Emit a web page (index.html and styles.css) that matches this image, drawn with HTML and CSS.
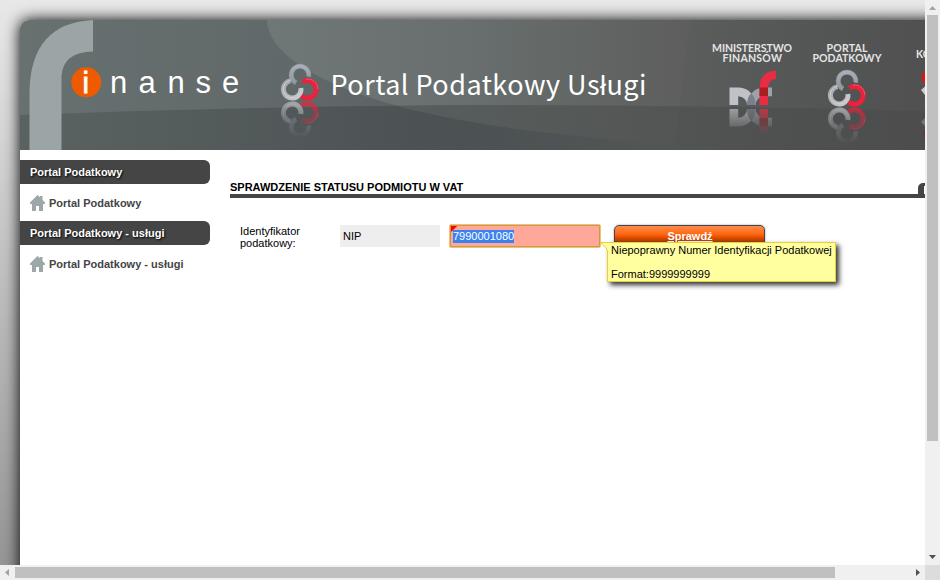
FILE: index.html
```html
<!DOCTYPE html>
<html lang="pl">
<head>
<meta charset="utf-8">
<title>Portal Podatkowy</title>
<link rel="stylesheet" href="styles.css">
</head>
<body>
<div class="window">
  <div class="viewport">
    <div class="page">
      <header class="banner">
        <svg width="905" height="130" viewBox="20 20 905 130">
          <defs>
            <linearGradient id="base" gradientUnits="userSpaceOnUse" x1="20" y1="0" x2="925" y2="0">
              <stop offset="0" stop-color="#677170"/><stop offset=".3" stop-color="#616869"/><stop offset=".5" stop-color="#5a6062"/><stop offset=".72" stop-color="#5c6061"/><stop offset="1" stop-color="#4a4a4a"/>
            </linearGradient>
            <linearGradient id="leaf" gradientUnits="userSpaceOnUse" x1="265" y1="0" x2="765" y2="0">
              <stop offset="0" stop-color="#707877"/><stop offset=".4" stop-color="#686f6e"/><stop offset=".9" stop-color="#5c5c5b"/><stop offset="1" stop-color="#575a5a"/>
            </linearGradient>
            <linearGradient id="sheen" gradientUnits="userSpaceOnUse" x1="690" y1="0" x2="925" y2="0">
              <stop offset="0" stop-color="#5a5d5d"/><stop offset="1" stop-color="#4d4d4c"/>
            </linearGradient>
            <linearGradient id="floor" gradientUnits="userSpaceOnUse" x1="20" y1="0" x2="925" y2="0">
              <stop offset="0" stop-color="#1c2020" stop-opacity=".18"/><stop offset=".45" stop-color="#1c2020" stop-opacity=".25"/><stop offset="1" stop-color="#303030" stop-opacity=".12"/>
            </linearGradient>
            <linearGradient id="silver" x1="0" y1="0" x2="1" y2="1">
              <stop offset="0" stop-color="#9fa4aa"/><stop offset="1" stop-color="#cacbcf"/>
            </linearGradient>
            <linearGradient id="steel" x1="0" y1="0" x2="0" y2="1">
              <stop offset="0" stop-color="#a9afb7"/><stop offset="1" stop-color="#8f979f"/>
            </linearGradient>
            <linearGradient id="fade" x1="0" y1="1" x2="0" y2="0">
              <stop offset="0" stop-color="#fff" stop-opacity=".7"/><stop offset=".95" stop-color="#fff" stop-opacity="0"/>
            </linearGradient>
            <mask id="ringfade" maskUnits="userSpaceOnUse" x="-2" y="-2" width="43" height="41"><rect x="-2" y="-2" width="43" height="39" fill="url(#fade)"/></mask>
            <mask id="mffade" maskUnits="userSpaceOnUse" x="-2" y="6" width="52" height="31"><rect x="-2" y="8" width="52" height="28" fill="url(#fade)"/></mask>
            <g id="rings" fill="none" stroke-width="5">
              <path d="M15 18.800A8.800 8.800 0 1 1 27.700 12.500" stroke="#858c92"/>
              <path d="M15 18.800A8.800 8.800 0 1 1 27.700 12.500" stroke="url(#steel)" stroke-width="3.600"/>
              <path d="M9.500 16.600A8.800 8.800 0 1 0 19.900 24" stroke="url(#silver)"/>
              <path d="M9.500 16.200A9 9 0 1 0 20.200 24.500" stroke="#d1d2d5" stroke-width="1"/>
              <path d="M21.500 18.100A8.800 8.800 0 1 1 20.500 31.900" stroke="#e9223d"/>
              <path d="M25 15.200A10 10 0 0 1 36.800 25" stroke="#ef6376" stroke-width=".8"/>
            </g>
            <g id="mf">
              <path d="M0 35V17.500H8.700A17.500 17.500 0 0 1 26.200 35H17.500A8.800 8.800 0 0 0 8.700 26.200V35Z" fill="#bfc2c7"/>
              <path d="M17.500 35A17.500 17.500 0 0 1 35 17.500H42.500V26.200H35A8.800 8.800 0 0 0 26.200 35Z" fill="#9da2aa"/>
              <path d="M17.500 35Q17.700 26.500 21.800 23.300Q26 28 26.200 35Z" fill="#7b818b"/>
              <path d="M30 35V17Q31 1 46.500 .7V9Q39 9.500 38.500 18V35Z" fill="#e92c43"/>
              <path d="M30 17.500H38.500V26H30Z" fill="#a71e25"/>
            </g>
          </defs>
          <rect x="20" y="20" width="905" height="130" fill="url(#base)"/>
          <path d="M267 20C269 65 355 100 455 119Q560 139 765 150H925V20Z" fill="url(#leaf)"/>
          <path d="M690 20L925 20V150H765Q700 147 675 145Z" fill="url(#sheen)" opacity=".75"/>
          <path d="M20 134.500V115Q230 107 450 105Q700 105 925 111V150H20Z" fill="url(#floor)"/>
          <path d="M29.500 150V91Q31 23 93 20V51.500Q63 52 61.500 76V150Z" fill="#9ca5a5"/>
          <circle cx="86.300" cy="82.300" r="15" fill="#ee5a00"/>
          <text class="brand-i" x="82.600" y="93">i</text>
          <text class="brand" x="110 138.500 167.500 195.500 222" y="93">nanse</text>
          <g transform="translate(281 64)"><use href="#rings"/></g>
          <g transform="translate(281 138) scale(1 -1)"><use href="#rings" mask="url(#ringfade)"/></g>
          <text class="title" x="330.500" y="94.800" textLength="316">Portal Podatkowy Usługi</text>
          <text class="label" x="712" y="51.500" textLength="80">MINISTERSTWO</text>
          <text class="label" x="722.500" y="61.500" textLength="59.500">FINANSÓW</text>
          <g transform="translate(729.500 70)"><use href="#mf"/></g>
          <g transform="translate(729.500 144) scale(1 -1)"><use href="#mf" mask="url(#mffade)"/></g>
          <text class="label" x="826.500" y="51.500" textLength="41">PORTAL</text>
          <text class="label" x="812.500" y="61.500" textLength="69">PODATKOWY</text>
          <g transform="translate(828 70)"><use href="#rings"/></g>
          <g transform="translate(828 144) scale(1 -1)"><use href="#rings" mask="url(#ringfade)"/></g>
          <text class="label" x="916" y="57.500">KO</text>
          <path d="M925 73Q921 77 925 83Z" fill="#f10d08" stroke="#f10d08" stroke-width="2"/>
          <path d="M921 90L925 86.500V95Z" fill="#ccc"/>
          <path d="M921 122L925 118V126Z" fill="#777"/>
          <path d="M923 132L925 130V140Z" fill="#6f3333"/>
        </svg>
      </header>
      <div class="columns">
        <nav class="menu">
          <h2 class="menu-title">Portal Podatkowy</h2>
          <a class="menu-link"><svg width="15" height="16" viewBox="0 0 15 16"><path d="M7.500 0L10 2.300V1H12.500V5L15 7.500V9H13V16H9V11H6V16H2V9H0V7.500Z" fill="#9ba7a8"/></svg>Portal Podatkowy</a>
          <h2 class="menu-title">Portal Podatkowy - usługi</h2>
          <a class="menu-link"><svg width="15" height="16" viewBox="0 0 15 16"><path d="M7.500 0L10 2.300V1H12.500V5L15 7.500V9H13V16H9V11H6V16H2V9H0V7.500Z" fill="#9ba7a8"/></svg>Portal Podatkowy - usługi</a>
        </nav>
        <main class="content">
          <div class="heading"><h1>SPRAWDZENIE STATUSU PODMIOTU W VAT</h1><span class="tab"></span></div>
          <div class="form">
            <label class="caption">Identyfikator podatkowy:</label>
            <div class="kind">NIP</div>
            <div class="field"><span class="selected">7990001080</span>
              <div class="tip">Niepoprawny Numer Identyfikacji Podatkowej<br><br>Format:9999999999
                <svg class="tip-tail" width="8" height="8" viewBox="0 0 8 8"><path d="M0 0H8V8H7V6.500Z" fill="#ffffa0"/><path d="M0 .5H8M.5 .5L6.500 6V8" fill="none" stroke="#e6d034"/></svg>
              </div>
            </div>
            <div class="submit"><span>Sprawdź</span></div>
          </div>
        </main>
      </div>
    </div>
  </div>
  <div class="vbar">
    <svg width="15" height="15"><path d="M4 10L7.500 6L11 10Z" fill="#a3a3a3"/></svg>
    <div class="vthumb"></div>
    <svg width="15" height="15"><path d="M4 5L7.500 9L11 5Z" fill="#505050"/></svg>
  </div>
  <div class="hbar">
    <svg width="15" height="15"><path d="M9 4L5 7.500L9 11Z" fill="#a3a3a3"/></svg>
    <div class="hthumb"></div>
    <svg width="15" height="15"><path d="M6 4L10 7.500L6 11Z" fill="#505050"/></svg>
  </div>
  <div class="corner"></div>
</div>
</body>
</html>
```
FILE: styles.css
```css
* { box-sizing: border-box; }
body {
  margin: 0;
  font: 11px/12px "Liberation Sans", Arial, sans-serif;
  color: #000;
}
svg { display: block; flex: none; }
.window {
  display: grid;
  grid-template: 565px 15px / 925px 15px;
  width: 940px;
  height: 580px;
  overflow: hidden;
}
.viewport {
  overflow: hidden;
  padding: 20px 0 0 20px;
  background: linear-gradient(#e8e8e8 0, #e4e4e4 30px, #959595 565px);
}
.page {
  width: 960px;
  height: 620px;
  background: #fff;
  border-top-left-radius: 9px;
  box-shadow: 0 0 15px #000;
}
.banner {
  height: 130px;
  width: 905px;
  overflow: hidden;
  border-top-left-radius: 9px;
}
.brand, .brand-i { font-family: "Liberation Sans", Arial, sans-serif; font-size: 31px; fill: #fff; }
.brand-i { font-size: 29px; stroke: #fff; stroke-width: .8px; }
.title { font-family: "Noto Sans CJK SC", sans-serif; font-size: 27px; fill: #fff; }
.label { font-family: Lato, sans-serif; font-weight: 700; font-size: 10.5px; fill: #e4e4e4; }

.columns { display: flex; gap: 20px; width: 905px; }
.menu { width: 190px; padding-top: 10px; }
.menu-title {
  margin: 0;
  height: 24px;
  padding-left: 10px;
  font-size: 11px;
  line-height: 24px;
  color: #fff;
  background: #454545;
  border-radius: 0 6px 6px 0;
  text-shadow: 1px 1px 2px #000;
}
.menu-link {
  display: flex;
  align-items: center;
  gap: 4px;
  height: 37px;
  padding: 1px 0 0 10px;
  font-weight: 700;
  color: #454545;
}
.content { flex: 1; padding-top: 31px; }
.heading {
  display: flex;
  justify-content: space-between;
  align-items: flex-end;
  height: 17px;
  border-bottom: 4px solid #454545;
}
.heading h1 { margin: 0; font-size: 11px; line-height: 13px; }
.tab {
  width: 7px;
  height: 11px;
  border: solid #454545;
  border-width: 3px 0 0 6px;
  border-top-left-radius: 5px;
}
.form { display: flex; align-items: flex-start; padding: 26px 0 0 10px; }
.caption { width: 100px; padding: 1px 20px 0 0; }
.kind { width: 100px; height: 22px; margin: 1px 9px 0 0; padding: 0 3px; line-height: 22px; background: #eee; }
.field {
  position: relative;
  width: 152px;
  height: 24px;
  padding: 5px 3px 0;
  border: 1px solid #eec274;
  border-radius: 2px;
  background: linear-gradient(135deg, #f00 0 5.5px, transparent 6px), #ffa899;
  box-shadow: inset 0 0 0 1px #cf9848;
}
.selected { display: inline-block; height: 13px; line-height: 13px; color: #fff; background: #3b82f1; }
.tip {
  position: absolute;
  left: 157px;
  top: 17px;
  width: 229px;
  height: 40px;
  padding: 1px 0 0 3px;
  white-space: nowrap;
  border: 1px solid #e6d034;
  background: #ffffa0;
  box-shadow: 3px 3px 5px #333;
  z-index: 2;
}
.tip-tail { position: absolute; left: -8px; top: -1px; }
.submit {
  width: 151px;
  height: 24px;
  margin: 1px 0 0 13px;
  border: 1px solid #454545;
  border-radius: 5px;
  background: linear-gradient(#ff8c4c 0, #ff6813 8px, #f45700 10px, #6d2600 20px);
  box-shadow: 0 0 2px #8b8b8b;
  color: #fff;
  font-weight: 700;
  line-height: 21px;
  text-align: center;
}
.submit span { padding-left: 1px; text-decoration: underline; text-underline-offset: 1px; }
.vbar { display: flex; flex-direction: column; background: #f0f0f0; }
.vthumb { width: 11px; height: 426px; margin: 0 2px auto; background: #c0c0c0; }
.hbar { display: flex; background: #f0f0f0; }
.hthumb { width: 820px; height: 11px; margin: 2px auto 2px 0; background: #c0c0c0; }
.corner { background: #dcdcdc; }
```
